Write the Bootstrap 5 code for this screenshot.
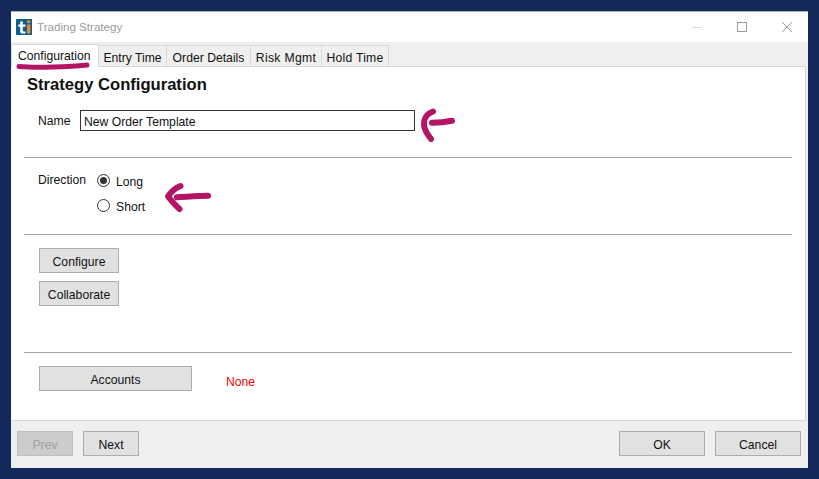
<!DOCTYPE html>
<html lang="en">
<head>
<meta charset="utf-8">
<title>Trading Strategy</title>
<link href="https://cdn.jsdelivr.net/npm/bootstrap@5.3.0/dist/css/bootstrap.min.css" rel="stylesheet">
<style>
html,body{height:100%;}
body{background:#15295b;padding:11px;margin:0;font-family:"Liberation Sans",Arial,sans-serif;font-size:12.2px;color:#111;overflow:hidden;position:relative;}
.win{width:797px;height:457px;background:#efefef;border-top:1px solid #a9b0c0;}
.titlebar{height:30px;background:#fff;color:#9a9a9a;font-size:11.6px;padding-left:5px;}
.logo{width:16px;height:16px;margin-right:5px;}
.wbtns{padding-right:16px;gap:35px;}
.tabstrip{height:24px;padding-left:1px;align-items:flex-end;}
.wtab{height:21px;background:#efefef;border:1px solid #d9d9d9;border-bottom:0;border-left:0;padding:0;text-align:center;line-height:24px;color:#111;white-space:nowrap;}
.wtab.on{height:23px;background:#fff;border-left:1px solid #d9d9d9;margin-left:-1px;padding:0 6px;text-align:left;line-height:23px;width:88px;margin-bottom:-1px;position:relative;z-index:1;}
.tw-entry{width:68px;}
.tw-order{width:84px;}
.tw-risk{width:71px;letter-spacing:.3px;}
.tw-hold{width:67px;letter-spacing:.25px;}
.pane{height:355px;width:795px;background:#fff;border:1px solid #d9d9d9;border-left:0;padding:0 13px;}
.heading{font-size:16.6px;font-weight:700;color:#111;line-height:20px;margin:0;padding:8px 0 0 3px;height:32px;}
.namerow{padding:11px 0 0 14px;height:58px;}
.namerow label{width:42px;line-height:20px;margin-top:1px;}
.nameinput{width:335px;height:21px;border:1px solid #333;background:#fff;padding:1px 3px 0;line-height:20px;color:#111;}
.rule{height:0;border-top:1px solid #a3a3a3;margin:0;opacity:1;}
.dirrow{height:76px;padding:14px 0 0 14px;}
.dirlabel{width:59px;margin-top:-1px;}
.radrow{height:25px;line-height:21px;gap:6px;}
.rad{width:13px;height:13px;border:1px solid #333;border-radius:50%;background:#fff;margin-top:2px;display:flex;align-items:center;justify-content:center;}
.rad i{display:block;width:7px;height:7px;background:#333;border-radius:50%;}
.winbtn{background:#e1e1e1;border:1px solid #adadad;font-size:12.2px;color:#111;height:25px;padding:2px 0 0;border-radius:0;line-height:22px;text-align:center;}
.winbtn:disabled{background:#cccccc;border-color:#bfbfbf;color:#a0a0a0;opacity:1;}
.actions{height:117px;padding:13px 0 0 15px;gap:8px;}
.w80{width:80px;}
.w153{width:153px;}
.w56{width:56px;}
.w86{width:86px;}
.acctrow{padding:13px 0 0 15px;}
.none{color:#f00;margin-left:34px;margin-top:7px;}
.foot{height:47px;padding:10px 7px 0 6px;}
.foot .gapl,.foot .gapr{gap:10px;}
.marks{position:absolute;left:0;top:0;z-index:2;pointer-events:none;}
</style>
</head>
<body>
<div class="win d-flex flex-column">
  <div class="titlebar d-flex align-items-center justify-content-between">
    <div class="d-flex align-items-center">
      <svg class="logo" viewBox="0 0 16 16"><rect width="16" height="16" fill="#0d5f92"/><rect x="11" y="5.500" width="3.400" height="9" fill="#ef8a22"/><rect x="11" y="1.500" width="3.400" height="2.600" fill="#ef8a22"/><path d="M4.200 2.500h2.600v3h2.600v2.200H6.800v4.100c0 .8.6.9 2.600.7v2H6.200c-1.500 0-2-.7-2-2.200V7.700H2.300V5.500h1.900z" fill="#fff"/></svg>
      <span>Trading Strategy</span>
    </div>
    <div class="d-flex align-items-center wbtns">
      <svg width="10" height="10" viewBox="0 0 10 10"><path d="M0 5.500h10" stroke="#dcdcdc"/></svg>
      <svg width="10" height="10" viewBox="0 0 10 10"><rect x=".5" y=".5" width="9" height="9" fill="none" stroke="#999"/></svg>
      <svg width="10" height="10" viewBox="0 0 10 10"><path d="M0 0l10 10M10 0L0 10" stroke="#999" fill="none"/></svg>
    </div>
  </div>
  <div class="tabstrip d-flex">
    <div class="wtab on">Configuration</div>
    <div class="wtab tw-entry">Entry Time</div>
    <div class="wtab tw-order">Order Details</div>
    <div class="wtab tw-risk">Risk Mgmt</div>
    <div class="wtab tw-hold">Hold Time</div>
  </div>
  <div class="pane">
    <h1 class="heading">Strategy Configuration</h1>
    <div class="namerow d-flex align-items-start">
      <label>Name</label>
      <div class="nameinput">New Order Template</div>
    </div>
    <hr class="rule">
    <div class="dirrow d-flex">
      <div class="dirlabel">Direction</div>
      <div>
        <div class="radrow d-flex"><span class="rad"><i></i></span><span>Long</span></div>
        <div class="radrow d-flex"><span class="rad"></span><span>Short</span></div>
      </div>
    </div>
    <hr class="rule">
    <div class="actions d-flex flex-column align-items-start">
      <button class="winbtn w80" type="button">Configure</button>
      <button class="winbtn w80" type="button">Collaborate</button>
    </div>
    <hr class="rule">
    <div class="acctrow d-flex align-items-start">
      <button class="winbtn w153" type="button">Accounts</button>
      <span class="none">None</span>
    </div>
  </div>
  <div class="foot d-flex justify-content-between align-items-start">
    <div class="d-flex gapl">
      <button class="winbtn w56" type="button" disabled>Prev</button>
      <button class="winbtn w56" type="button">Next</button>
    </div>
    <div class="d-flex gapr">
      <button class="winbtn w86" type="button">OK</button>
      <button class="winbtn w86" type="button">Cancel</button>
    </div>
  </div>
</div>
<svg class="marks" width="819" height="479" viewBox="0 0 819 479" fill="none" stroke="#b31564" stroke-linecap="round" stroke-linejoin="round">
  <path d="M19 66.500C35 68 70 67 87 65" stroke-width="5"/>
  <path d="M433 111.500C426 114 423.500 120 424 125C424.500 131 428 135 431 139" stroke-width="6"/>
  <path d="M432 122.700C438 122.700 446 122 452 120.800" stroke-width="6"/>
  <path d="M180.500 186C175 188 171 192 168 196.500C171 200 175 205 179.500 209" stroke-width="6"/>
  <path d="M177 197.300C187 196.800 198 196 208 195.800" stroke-width="6"/>
</svg>
<script src="https://cdn.jsdelivr.net/npm/bootstrap@5.3.0/dist/js/bootstrap.bundle.min.js"></script>
</body>
</html>
